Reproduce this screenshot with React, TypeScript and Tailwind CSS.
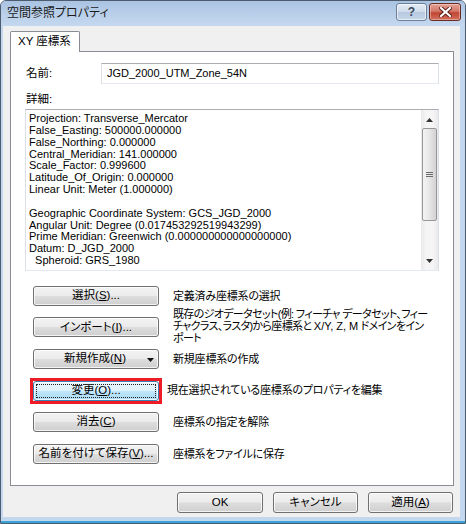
import type { ReactNode } from "react";

// Win7-style push button
function WinButton({
  children,
  className = "",
  focused = false,
}: {
  children: ReactNode;
  className?: string;
  focused?: boolean;
}) {
  return (
    <div
      className={`relative flex h-[20px] shrink-0 items-center justify-center rounded-[3px] border text-[11.5px] leading-none tracking-normal text-black ${
        focused
          ? "border-[#3c7fb1] bg-[linear-gradient(to_bottom,#ecf7fd_0%,#dcf1fc_48%,#c0e6fb_52%,#a9d9f4_100%)]"
          : "border-[#707070] bg-[linear-gradient(to_bottom,#f3f3f3_0%,#ebebeb_48%,#dddddd_52%,#cfcfcf_100%)]"
      } shadow-[inset_0_0_0_1px_rgba(255,255,255,0.75)] ${className}`}
    >
      {focused && (
        <span className="pointer-events-none absolute inset-[2px] border border-dotted border-[#222]" />
      )}
      {children}
    </div>
  );
}

function U({ children }: { children: ReactNode }) {
  return <span className="underline underline-offset-[1px]">{children}</span>;
}

const DETAILS = [
  "Projection: Transverse_Mercator",
  "False_Easting: 500000.000000",
  "False_Northing: 0.000000",
  "Central_Meridian: 141.000000",
  "Scale_Factor: 0.999600",
  "Latitude_Of_Origin: 0.000000",
  "Linear Unit: Meter (1.000000)",
  "",
  "Geographic Coordinate System: GCS_JGD_2000",
  "Angular Unit: Degree (0.017453292519943299)",
  "Prime Meridian: Greenwich (0.000000000000000000)",
  "Datum: D_JGD_2000",
  "\u00a0\u00a0Spheroid: GRS_1980",
];

export default function App() {
  return (
    <div className="flex h-[524px] w-[466px] flex-col overflow-hidden rounded-t-[6px] border border-[#4d5b6e] bg-[#c3d7ee] font-['Liberation_Sans','Noto_Sans_CJK_JP',sans-serif] [font-feature-settings:'palt']">
      {/* title bar */}
      <div className="flex h-[25px] shrink-0 items-start justify-between bg-[linear-gradient(to_bottom,#a9c3e2_0%,#b9cfe9_50%,#c4d8ef_100%)] pl-[6px] pr-[4px]">
        <span className="mt-[5px] text-[12px] leading-[14px] text-[#1b1b1b]">
          空間参照プロパティ
        </span>
        <div className="mt-[2px] flex gap-[2px]">
          <div className="flex h-[18px] w-[31px] items-center justify-center rounded-[3px] border border-[#6d7f98] bg-[linear-gradient(to_bottom,#e3ebf5_0%,#cfdcec_48%,#b7c9e0_52%,#c7d6ea_100%)] shadow-[inset_0_0_0_1px_rgba(255,255,255,0.6)]">
            <span className="text-[12px] font-bold leading-none text-[#3b4a5e]">?</span>
          </div>
          <div className="flex h-[18px] w-[32px] items-center justify-center rounded-[3px] border border-[#6a2a22] bg-[linear-gradient(to_bottom,#e3a396_0%,#d2786a_45%,#c24532_55%,#d0715e_100%)] shadow-[inset_0_0_0_1px_rgba(255,255,255,0.35)]">
            <svg width="13" height="10" viewBox="0 0 13 10">
              <path
                d="M2 1 L11 9 M11 1 L2 9"
                stroke="#5a1d15"
                strokeWidth="4"
                strokeLinecap="square"
              />
              <path
                d="M2 1 L11 9 M11 1 L2 9"
                stroke="#ffffff"
                strokeWidth="2.2"
                strokeLinecap="square"
              />
            </svg>
          </div>
        </div>
      </div>

      {/* client area */}
      <div className="ml-[2px] mr-[5px] flex flex-1 flex-col bg-[#f0f0f0] px-[7px] pt-[5px]">
        {/* tab header */}
        <div className="relative z-10 -mb-px flex">
          <div className="flex h-[21px] w-[70px] items-center rounded-t-[2px] border border-b-0 border-[#898c95] bg-white pl-[7px] text-[11.5px] leading-none text-black">
            XY 座標系
          </div>
        </div>

        {/* tab panel */}
        <div className="flex h-[435px] w-[444px] flex-col border border-[#898c95] bg-white px-[14px] pt-[11px]">
          <div className="flex h-[21px] items-center">
            <span className="ml-[1px] w-[75px] text-[11.5px] text-black">名前:</span>
            <div className="flex h-[21px] flex-1 items-center border border-[#abadb3] border-x-[#dbdfe6] border-b-[#e3e9ef] bg-white pl-[5px] text-[11px] text-black">
              JGD_2000_UTM_Zone_54N
            </div>
          </div>

          <div className="ml-[1px] mt-[9px] text-[11.5px] leading-[13px] text-black">詳細:</div>

          <div className="mt-[3px] flex h-[162px] border border-[#abadb3] border-x-[#dbdfe6] border-b-[#e3e9ef] bg-white">
            <div className="flex-1 pl-[3px] pt-[3px] text-[11px] leading-[11.85px] whitespace-pre text-black">
              {DETAILS.map((line, i) => (
                <div key={i} className="h-[11.85px]">
                  {line}
                </div>
              ))}
            </div>
            {/* scrollbar */}
            <div className="flex w-[17px] flex-col items-center bg-[linear-gradient(to_right,#e9e9e9,#f5f5f5_30%,#f5f5f5_70%,#e9e9e9)] py-[1px]">
              <div className="flex h-[17px] items-center justify-center">
                <svg width="7" height="4" viewBox="0 0 7 4">
                  <path d="M0 4 L3.5 0 L7 4 Z" fill="#333" />
                </svg>
              </div>
              <div className="flex h-[93px] w-[15px] items-center justify-center rounded-[2px] border border-[#979797] bg-[linear-gradient(to_right,#f4f4f4,#e6e6e6_50%,#d2d2d2)]">
                <div className="flex flex-col gap-[1px]">
                  <div className="h-px w-[7px] bg-[#6a6a6a]" />
                  <div className="h-px w-[7px] bg-[#6a6a6a]" />
                  <div className="h-px w-[7px] bg-[#6a6a6a]" />
                </div>
              </div>
              <div className="flex-1" />
              <div className="flex h-[17px] items-center justify-center">
                <svg width="7" height="4" viewBox="0 0 7 4">
                  <path d="M0 0 L7 0 L3.5 4 Z" fill="#333" />
                </svg>
              </div>
            </div>
          </div>

          {/* action rows */}
          <div className="mt-[9px] flex flex-col whitespace-nowrap pl-[8px] text-[11px] tracking-[-0.2px] text-black">
            <div className="flex h-[31.6px] items-center gap-[14px]">
              <WinButton className="w-[126px]">
                選択(<U>S</U>)...
              </WinButton>
              <span>定義済み座標系の選択</span>
            </div>
            <div className="flex h-[31.6px] items-center gap-[14px]">
              <WinButton className="w-[126px]">
                インポート(<U>I</U>)...
              </WinButton>
              <span className="mb-[3px] leading-[12px] tracking-[-0.65px]">
                既存のジオデータセット(例: フィーチャ データセット、フィー
                <br />
                チャクラス、ラスタ)から座標系と <span className="tracking-normal">X/Y, Z, M</span> ドメインをイン
                <br />
                ポート
              </span>
            </div>
            <div className="flex h-[31.6px] items-center gap-[14px]">
              <WinButton className="w-[126px]">
                <span className="mr-[2px]">
                  新規作成(<U>N</U>)
                </span>
                <svg
                  className="absolute right-[4px] top-[8px]"
                  width="7"
                  height="4"
                  viewBox="0 0 7 4"
                >
                  <path d="M0 0 L7 0 L3.5 4 Z" fill="#111" />
                </svg>
              </WinButton>
              <span>新規座標系の作成</span>
            </div>
            <div className="flex h-[31.6px] items-center gap-[14px]">
              <div className="-m-[3px] shrink-0 border-[3px] border-[#ee1c24]">
                <WinButton focused className="w-[126px]">
                  変更(<U>O</U>)...
                </WinButton>
              </div>
              <span className="-ml-[6px]">現在選択されている座標系のプロパティを編集</span>
            </div>
            <div className="flex h-[31.6px] items-center gap-[14px]">
              <WinButton className="w-[126px]">
                消去(<U>C</U>)
              </WinButton>
              <span>座標系の指定を解除</span>
            </div>
            <div className="flex h-[31.6px] items-center gap-[14px]">
              <WinButton className="w-[126px]">
                名前を付けて保存(<U>V</U>)...
              </WinButton>
              <span>座標系をファイルに保存</span>
            </div>
          </div>
        </div>

        {/* dialog buttons */}
        <div className="mt-[6px] flex justify-end gap-[10px]">
          <WinButton className="h-[21px] w-[86px]">OK</WinButton>
          <WinButton className="h-[21px] w-[85px]">キャンセル</WinButton>
          <WinButton className="h-[21px] w-[85px]">
            適用(<U>A</U>)
          </WinButton>
        </div>
      </div>
      <div className="h-[6px] shrink-0 border-b-2 border-[#3aa3d8]" />
    </div>
  );
}
